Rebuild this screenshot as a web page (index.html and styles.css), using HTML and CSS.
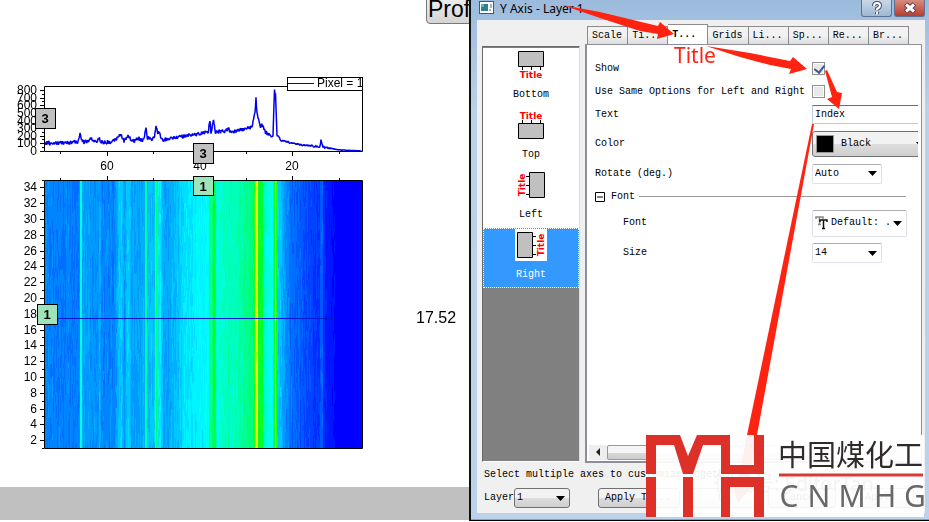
FILE: index.html
```html
<!DOCTYPE html>
<html lang="en">
<head>
<meta charset="utf-8">
<title>Y Axis - Layer 1</title>
<link rel="stylesheet" href="styles.css">
</head>
<body>
<main class="desk">
  <section class="graph">
    <svg class="plot" viewBox="0 0 469 487" aria-label="Profile plots">
      <foreignObject x="45" y="181" width="317" height="267"><canvas id="heat" class="heat" width="317" height="267"></canvas></foreignObject>
      <g id="ticks" class="ticks"></g>
      <g id="labels" class="labels"></g>
      <path id="trace" class="trace"/>
      <path class="frame" d="M44.5 86.500H362.500V151.500H44.500ZM44.500 180.500H362.500V448.500H44.500Z"/>
      <path class="cursor" d="M44 318.500H335"/>
      <rect class="legend" x="287.500" y="77.500" width="75" height="13"/>
      <path class="key" d="M288 83.500H314"/>
      <text class="tick" x="317" y="87">Pixel = 1</text>
      <g class="marker">
        <rect x="35.500" y="108.500" width="20" height="20"/><text x="45" y="123">3</text>
        <rect x="193.500" y="143.500" width="20" height="20"/><text x="203" y="158">3</text>
      </g>
      <g class="marker green">
        <rect x="193.500" y="176.500" width="20" height="19"/><text x="203" y="191">1</text>
        <rect x="37.500" y="304.500" width="20" height="20"/><text x="47" y="319">1</text>
      </g>
      <text class="readout" x="416" y="323">17.52</text>
    </svg>
    <button class="profile" type="button">Prof</button>
    <div class="strip"></div>
  </section>

  <section class="dialog">
    <header class="titlebar">
      <svg class="appicon" width="15" height="13"><rect x=".5" y=".5" width="14" height="12" fill="#fff" stroke="#555"/><rect x="2" y="3" width="7" height="7" fill="#2c8090"/><path d="M2 3h3v3H2z" fill="#65b990"/><path d="M10 9h2M12 3v4" stroke="#468"/></svg>
      <h1>Y Axis - Layer 1</h1>
      <div class="winbtns">
        <button type="button" class="help" aria-label="Help"><svg width="12" height="14" viewBox="0 0 12 14"><path d="M3 5q0-3 3-3t3 2.500q0 2-3 3.500v1M6 11v2" fill="none" stroke="#445064" stroke-width="4"/><path d="M3 5q0-3 3-3t3 2.500q0 2-3 3.500v1M6 11v2" fill="none" stroke="#fff" stroke-width="2"/></svg></button>
        <button type="button" class="close" aria-label="Close"><svg width="14" height="12" viewBox="0 0 14 12"><path d="M2.500 2l9 8M11.500 2l-9 8" stroke="#553642" stroke-width="5"/><path d="M3 2.500l8 7M11 2.500l-8 7" stroke="#fff" stroke-width="3"/></svg></button>
      </div>
    </header>
    <div class="client">
      <div class="columns">
        <ul class="axes">
          <li><svg class="axis" width="32" height="32"><path d="M3.500 2.500h25v15h-25zM7.500 18v3M16.500 18v3M25.500 18v3"/><text x="16" y="29">Title</text></svg><span>Bottom</span></li>
          <li><svg class="axis" width="32" height="32"><path d="M3.500 14.500h25v15h-25zM7.500 14v-3M16.500 14v-3M25.500 14v-3"/><text x="16" y="10">Title</text></svg><span>Top</span></li>
          <li><svg class="axis" width="32" height="32"><path d="M14.500 3.500h15v25h-15zM14 7.500h-3M14 16.500h-3M14 25.500h-3"/><text transform="translate(10 16) rotate(-90)">Title</text></svg><span>Left</span></li>
          <li class="selected"><svg class="axis" width="32" height="32"><path d="M2.500 3.500h15v25h-15zM18 7.500h3M18 16.500h3M18 25.500h3"/><text transform="translate(29 16) rotate(-90)">Title</text></svg><span>Right</span></li>
        </ul>
        <div class="pages">
          <nav class="tabs">
            <button type="button">Scale</button><button type="button">Ti...</button><button type="button" class="active">T...</button><button type="button">Grids</button><button type="button">Li...</button><button type="button">Sp...</button><button type="button">Re...</button><button type="button">Br...</button>
          </nav>
          <div class="panel">
            <form class="fields">
              <div class="row"><label for="show">Show</label><input type="checkbox" id="show" checked></div>
              <div class="row"><label for="same">Use Same Options for Left and Right</label><input type="checkbox" id="same"></div>
              <div class="row"><label for="text">Text</label><input type="text" id="text" value="Index"></div>
              <div class="row colour"><label for="color">Color</label><div class="combo raised"><i class="swatch"></i><select id="color"><option>Black</option></select><svg class="arrow" width="9" height="5"><path d="M0 0h9L4.500 5z"/></svg></div></div>
              <div class="row"><label for="rotate">Rotate (deg.)</label><div class="combo small"><select id="rotate"><option>Auto</option></select><svg class="arrow" width="9" height="5"><path d="M0 0h9L4.500 5z"/></svg></div></div>
              <div class="group"><svg width="10" height="10"><path d="M.5.5h9v9h-9zM2 5h6" fill="none" stroke="#000"/></svg><span>Font</span><hr></div>
              <div class="row tall sub"><label for="font">Font</label><div class="combo font"><svg width="13" height="14"><path d="M1 3V1h7v2M4.500 1v7M3 8.500h3" fill="none" stroke="#888" stroke-width="1.500"/><path d="M5 6V4h7v2M8.500 4v8M7 12.500h3" fill="none" stroke="#111" stroke-width="1.500"/></svg><select id="font"><option>Default: .</option></select><svg class="arrow" width="9" height="5"><path d="M0 0h9L4.500 5z"/></svg></div></div>
              <div class="row tall sub"><label for="size">Size</label><div class="combo small"><select id="size"><option>14</option></select><svg class="arrow" width="9" height="5"><path d="M0 0h9L4.500 5z"/></svg></div></div>
            </form>
            <div class="scroll"><svg width="18" height="14"><path d="M11 3v8L7 7z" fill="#222"/></svg><div class="thumb"></div></div>
          </div>
        </div>
      </div>
      <p class="hint">Select multiple axes to customize together</p>
      <div class="actions">
        <label for="layer">Layer</label>
        <div class="combo raised layer"><select id="layer"><option>1</option></select><svg class="arrow" width="9" height="5"><path d="M0 0h9L4.500 5z"/></svg></div>
        <button type="button" class="push apply">Apply To...</button>
        <button type="button" class="push">OK</button>
        <button type="button" class="push">Cancel</button>
        <button type="button" class="push">Apply</button>
      </div>
    </div>
  </section>
</main>

<svg class="notes" viewBox="0 0 929 522">
  <g fill="#ff2312">
    <path d="M562 5L600 12 658 26 660 22 674 34 657 39 658 34 640 31 600 18Z"/>
    <path d="M706 46L750 53 790 61 793 57 807 69 789 74 791 69 770 65 740 57Z"/>
    <path d="M825 71L827 70 837 92 842 93 839 109 827 99 832 97Z"/>
    <path d="M812 124H814L757 435 748 484 753 485 738 503 730 478 738 481 747 435Z"/>
    <text class="callout" x="674" y="63">Title</text>
  </g>
  <rect x="646" y="435" width="278" height="82" fill="#fff" fill-opacity=".93"/>
  <text class="account" x="714" y="491">微信号: EditorTan</text>
  <path fill="#dc3028" d="M646 435H680L688 456 697 435H730V465H754V435H764V474H721V445H703L693 474H683L674 445H656V474H646ZM646 477H656V517H646ZM683 477H693V517H683ZM721 477H764V517H754V487H730V517H721Z"/>
  <path d="M779 475H923" stroke="#d83b36" stroke-width="3"/>
  <text class="brandcn" x="778" y="466">中国煤化工</text>
  <g class="brand"><text x="789" y="507">C</text><text x="819" y="507">N</text><text x="852" y="507">M</text><text x="885" y="507">H</text><text x="915" y="507">G</text></g>
</svg>
<script src="plot.js"></script>
</body>
</html>
```

FILE: styles.css
```css
* { box-sizing: border-box; }
body {
  margin: 0;
  position: relative;
  background: #fff;
  font-family: "Liberation Mono", monospace;
  font-size: 10px;
  line-height: 12px;
  color: #000;
}
button, input, select { font: inherit; color: inherit; margin: 0; }
.desk { display: grid; grid-template-columns: 469fr 460fr; min-height: 100vh; overflow: hidden; }

.graph { position: relative; display: flex; flex-direction: column; overflow: hidden; }
.plot { display: block; width: 100%; font-family: "Liberation Sans", sans-serif; }
.heat { display: block; }
.strip { height: 33px; background: #c0c0c0; }
.profile {
  position: absolute; right: -40px; top: -8px;
  width: 83px; height: 32px; padding: 0 1px;
  border: 1px solid #777; border-radius: 4px;
  background: linear-gradient(#f4f4f4, #d4d4d4);
  font: 23px/32px "Liberation Sans", sans-serif; text-align: left;
}
.trace, .key { fill: none; stroke: #0000f0; }
.trace { stroke-width: 1.500; stroke-linejoin: bevel; }
.frame, .ticks { fill: none; stroke: #000; }
.labels { font-size: 12px; text-anchor: end; }
.tick { font-size: 12px; }
.labels .mid { text-anchor: middle; }
.cursor { stroke: #0018d0; }
.legend { fill: #fff; stroke: #000; }
.marker rect { fill: #c0c0c0; stroke: #000; }
.marker.green rect { fill: #9fe3b9; }
.marker text { font-size: 13px; font-weight: bold; text-anchor: middle; }
.readout { font-size: 16px; }

.dialog {
  display: flex; flex-direction: column;
  margin-bottom: 1px; padding: 0 4px 7px 6px;
  border-left: 2px solid #111; border-bottom: 1px solid #000;
  background: linear-gradient(#9cbbdc, #b9d1ea 110px, #bad2eb);
  box-shadow: inset 0 -1px #30c8e0;
}
.titlebar { display: flex; align-items: flex-start; height: 20px; gap: 6px; padding-left: 2px; }
.appicon { margin-top: 1px; }
.titlebar h1 { flex: 1; margin: 0; font: 12px/18px "Noto Sans", sans-serif; }
.winbtns { display: flex; gap: 2px; }
.winbtns button {
  display: grid; place-items: center; width: 31px; height: 17px; padding: 0;
  border: 1px solid #5d7290; border-top: 0; border-radius: 0 0 3px 3px;
}
.help { background: linear-gradient(#c9d8e8, #9fb7d2); }
.close { background: linear-gradient(#d78c80, #bd3c2a); }
.client { flex: 1; display: flex; flex-direction: column; padding: 4px 3px 0 5px; background: #f0f0f0; }
.columns { flex: 1; display: flex; gap: 5px; }
.axes {
  width: 98px; margin: 22px 0 1px; padding: 1px 0; list-style: none;
  border: 1px solid #696969; border-right-color: #ddd; border-bottom-color: #fff; background: #808080;
}
.axes li { height: 60px; padding-top: 1px; background: #fff; text-align: center; }
.axes svg { display: block; margin: 0 auto 8px; background: #fff; }
.axes .selected { background: #3399ff; color: #fff; outline: 1px dotted #fff; outline-offset: -1px; }
.axis path { fill: #c0c0c0; stroke: #000; }
.axis text { fill: #f00; font: bold 9px "DejaVu Sans", sans-serif; text-anchor: middle; }
.pages { flex: 1; min-width: 0; display: flex; flex-direction: column; }
.tabs { display: flex; align-items: flex-end; height: 20px; padding: 0 13px 0 2px; }
.tabs button {
  flex: 1; height: 18px; padding: 0 0 0 4px; text-align: left; white-space: nowrap;
  border: 1px solid #8c8c8c; border-left-width: 0; border-bottom: 0;
  background: linear-gradient(#f2f2f2 50%, #dcdcdc);
}
.tabs button:first-child { border-left-width: 1px; }
.tabs .active { height: 20px; background: #fff; font-weight: bold; }
.panel { flex: 1; display: flex; flex-direction: column; border: 1px solid #8c8e9a; border-left-width: 2px; border-bottom-width: 2px; background: #fff; padding: 12px 3px 1px 2px; }
.fields { flex: 1; padding-left: 6px; overflow: hidden; }
.row { display: grid; grid-template-columns: 217px 1fr; align-items: center; height: 23px; }
.row.tall { height: 30px; }
.row.colour { height: 36px; }
.sub { padding-left: 28px; grid-template-columns: 189px 1fr; }
.row label { white-space: nowrap; }
.row input[type=checkbox] {
  appearance: none; width: 13px; height: 13px;
  border: 1px solid #8e8f8f; background: #e8e8e8; box-shadow: inset 0 0 0 1px #fff;
}
.row input[type=checkbox]:checked::after {
  content: ""; display: block; width: 5px; height: 8px; margin: 0 0 0 3px;
  border: solid #3d5599; border-width: 0 2px 2px 0; transform: rotate(38deg);
}
.row input[type=text] {
  width: 100%; height: 19px; padding: 0 2px;
  border: 1px solid #b5cfe7; border-top-color: #3d7bad; border-right: 0; background: #fff;
}
.combo { display: flex; align-items: center; height: 20px; padding: 0 4px 0 2px; border: 1px solid #dfe1e8; border-top-color: #abadb3; border-radius: 2px; }
.combo select { flex: 1; min-width: 0; appearance: none; border: 0; padding: 0; background: transparent; outline: 0; }
.small { width: 70px; }
.font { width: 95px; height: 27px; }
.font select { padding-left: 3px; }
.raised { height: 26px; border: 1px solid #707070; border-radius: 3px; background: linear-gradient(#f2f2f2 50%, #dddddd 50%, #cfcfcf); }
.row .raised { width: calc(100% + 12px); gap: 7px; }
.swatch { width: 18px; height: 18px; margin-left: 1px; background: #000; border: 1px solid #999; }
.group { display: flex; align-items: center; gap: 6px; height: 23px; }
.group hr { flex: 1; margin: 0 12px 0 -2px; border: 0; border-top: 1px solid #999; }
.scroll { display: flex; height: 15px; background: #eee; }
.thumb { width: 220px; border: 1px solid #999; border-radius: 2px; background: linear-gradient(#f5f5f5 50%, #d9d9d9 50%, #ccc); }
.hint { margin: 6px 0 6px 2px; white-space: nowrap; }
.actions { display: flex; align-items: center; height: 26px; padding: 0 0 4px 2px; }
.row .raised, .layer { flex: none; }
.layer { width: 56px; height: 20px; }
.push { width: 68px; height: 20px; margin-left: 10px; padding: 0; white-space: nowrap; border: 1px solid #707070; border-radius: 3px; background: linear-gradient(#f2f2f2 50%, #dddddd 50%, #cfcfcf); }
.apply { width: 82px; margin-left: 28px; padding-left: 6px; text-align: left; }

.notes { position: absolute; left: 0; top: 0; width: 100%; pointer-events: none; }
.callout { font: 21px "Noto Sans", sans-serif; }
.account { font: 20px "Noto Sans", "Noto Sans CJK SC", sans-serif; fill: #f3f3f3; }
.brandcn { font: 29px "Noto Sans CJK SC", sans-serif; fill: #302b2b; }
.brand { font: 30px "Noto Sans", sans-serif; fill: #686868; text-anchor: middle; }
```

FILE: plot.js
```js
const NS = "http://www.w3.org/2000/svg";
let seed = 7;
function rnd() {
  seed = (seed * 1664525 + 1013904223) % 4294967296;
  return seed / 4294967296;
}
function interpolate(points, x) {
  for (let i = 1; i < points.length; i++) {
    if (x <= points[i][0]) {
      const [a, p] = points[i - 1], [b, q] = points[i];
      return p + (q - p) * (x - a) / (b - a);
    }
  }
  return points[points.length - 1][1];
}

// Spectrum profile: [x, y] in plot units
const profile = [[44,143],[60,143],[78,142],[80,133],[82,140],[84,142],[89,141],[91,138],[94,142],[97,141],[99,138],[101,142],[113,142],[118,137],[121,135],[124,141],[128,136],[131,140],[135,141],[138,138],[141,140],[144,140],[146,126],[147,138],[154,139],[156,125],[158,135],[159,131],[162,140],[172,138],[185,136],[193,135],[206,132],[208,134],[210,120],[211,134],[213.5,119],[215,132],[226,131],[228,128],[231,132],[245,129],[252,127],[255,112],[256,99],[257,114],[260,127],[262,124],[265,132],[273,136],[274.500,91],[275.500,93],[277,135],[281,140],[295,144],[312,146],[320,147],[321,140],[323,147],[340,150],[362,151]];
let d = "";
for (let x = 45; x < 362; x += .5) {
  const amp = x > 330 ? .6 : x > 275 ? 2 : 4;
  const y = interpolate(profile, x) + (rnd() - .5) * amp;
  d += (d ? "L" : "M") + x + " " + Math.min(151, y).toFixed(1);
}
document.getElementById("trace").setAttribute("d", d);

// Intensity across the image, and the colour scale for it
const level = [[44,.175],[60,.17],[78,.17],[79,.2],[80,.35],[81,.34],[82,.22],[97,.19],[99,.24],[101,.175],[114,.175],[118,.25],[121,.28],[124,.2],[128,.29],[131,.22],[142,.22],[144,.24],[145,.44],[146,.44],[147,.25],[154,.27],[156,.48],[157,.46],[158,.3],[160,.3],[163,.22],[175,.25],[185,.3],[208,.34],[209,.48],[211,.42],[213,.56],[215,.5],[216,.38],[225,.4],[240,.43],[253,.49],[254,.6],[255,.72],[257,.74],[258,.55],[262,.55],[263,.4],[272,.34],[273,.48],[274,.56],[275,.74],[276,.6],[277,.28],[290,.15],[310,.09],[319,.07],[320,.13],[322,.13],[323,.06],[327,.03],[334,.015],[337,0],[362,0]];
const scale = [[0,0,0,255],[.34,0,255,255],[.56,0,255,40],[.66,80,255,0],[.74,255,255,0],[.9,255,60,0]];
const ctx = document.getElementById("heat").getContext("2d");
const w = 317, h = 267;
const column = Array.from({ length: w }, () => rnd() - .5);
for (let x = 0; x < w; x++) {
  const v0 = interpolate(level, x + 45);
  const amp = x > 292 ? 0 : x > 275 ? .02 : .04;
  let y = 0;
  while (y < h) {
    const run = 4 + Math.floor(rnd() * 20);
    let v = v0 + column[x] * amp * .6 + (rnd() - .5) * amp;
    v = Math.max(0, Math.round(v * 34) / 34);
    const c = [1, 2, 3].map(k => Math.round(interpolate(scale.map(s => [s[0], s[k]]), v)));
    ctx.fillStyle = "rgb(" + c.join() + ")";
    ctx.fillRect(x, y, 1, run);
    y += run;
  }
}

const ticks = document.getElementById("ticks");
const labels = document.getElementById("labels");
function tick(path) {
  const p = document.createElementNS(NS, "path");
  p.setAttribute("d", path);
  ticks.append(p);
}
function label(x, y, value, cls) {
  const t = document.createElementNS(NS, "text");
  t.setAttribute("x", x);
  t.setAttribute("y", y);
  if (cls) t.setAttribute("class", cls);
  t.textContent = value;
  labels.append(t);
}
for (let n = 0; n <= 8; n++) {
  const y = Math.round(151 - n * 7.6) + .5;
  tick(`M40 ${y}H44`);
  if (n < 8) tick(`M42 ${y - 4}H44`);
  label(37, y + 3, n * 100);
}
for (let n = 1; n <= 34; n++) {
  const y = Math.round(448 - (n - 1) * 7.9) + .5;
  tick(n % 2 ? `M42 ${y}H44` : `M40 ${y}H44`);
  if (n % 2 === 0) label(37, y + 3, n);
}
tick("M42 180.5H44");
for (const [x, value] of [[60, 0], [107, 60], [153, 0], [246, 0], [292, 20], [339, 0]]) {
  const len = value ? 4 : 2;
  tick(`M${x}.5 151V${152 + len}M${x}.5 180V${180 - len}`);
  if (value) label(x, 170, value, "mid");
}
label(200, 170, 40, "mid");
```
